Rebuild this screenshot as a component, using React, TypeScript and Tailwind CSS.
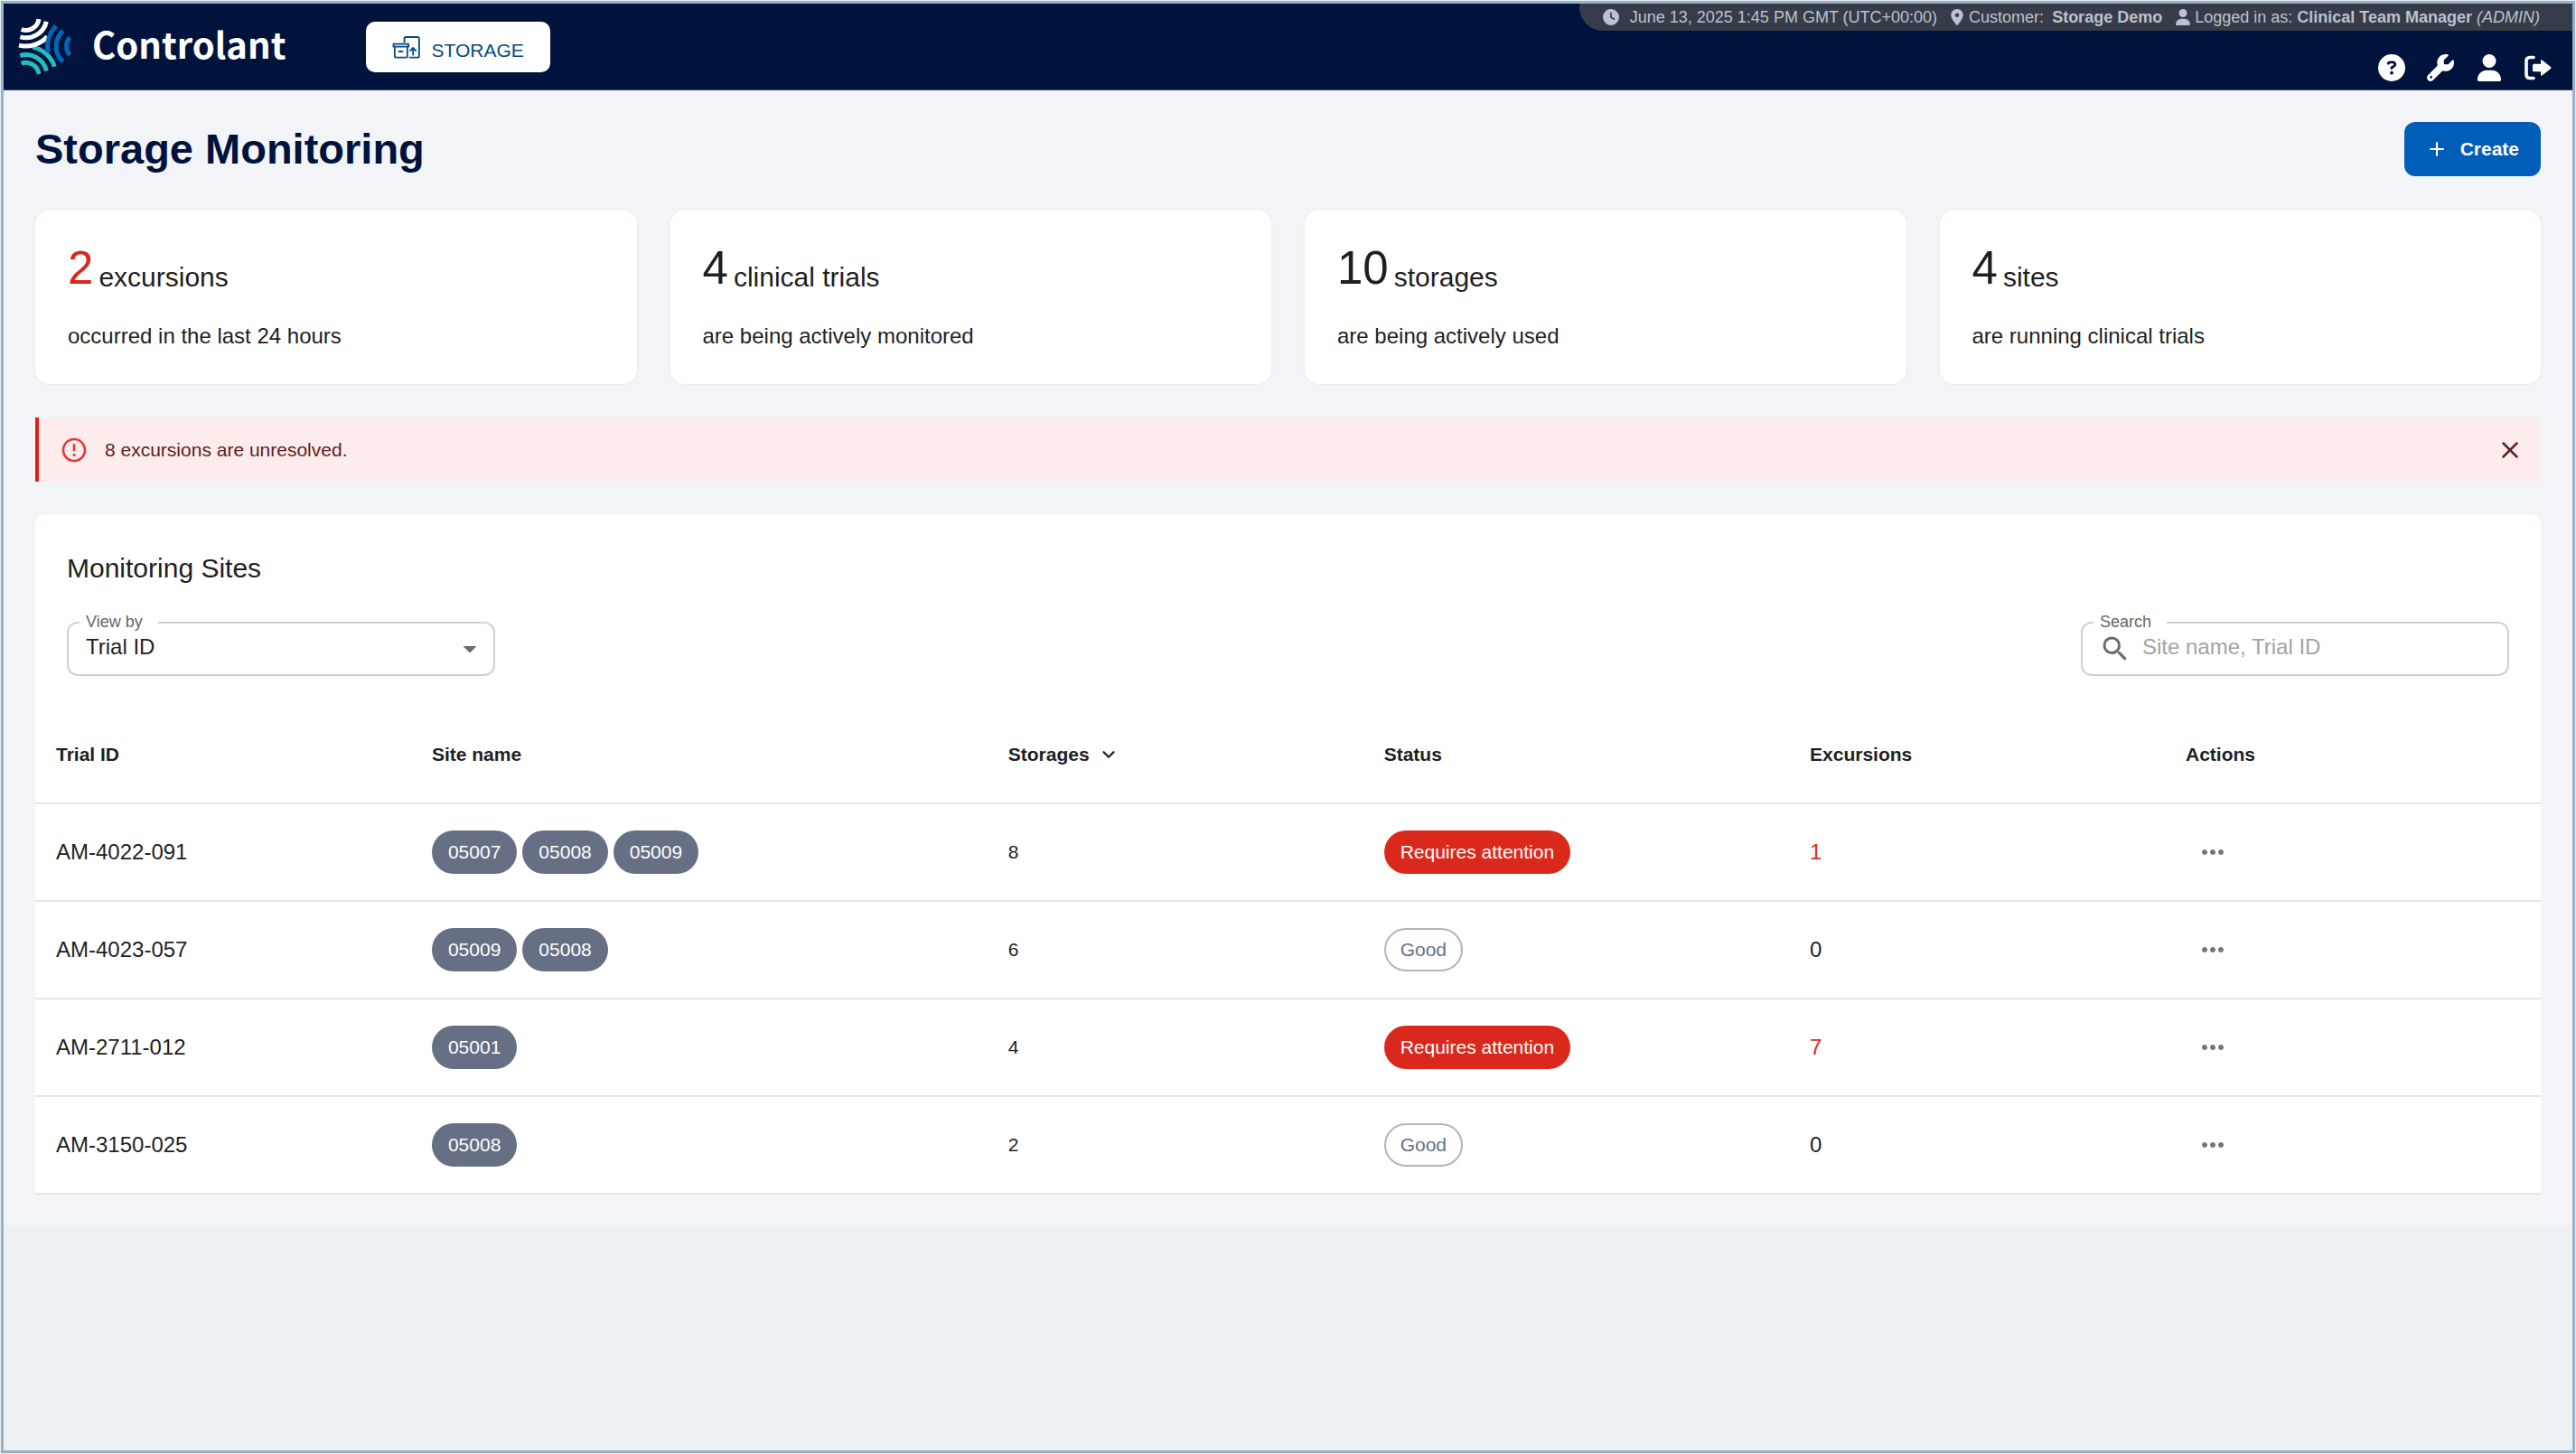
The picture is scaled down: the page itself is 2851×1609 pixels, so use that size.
import type { ReactNode } from "react";
import { FaClock, FaLocationDot, FaUser, FaCircleQuestion, FaWrench } from "react-icons/fa6";
import { MdArrowDropDown, MdErrorOutline, MdMoreHoriz, MdSearch } from "react-icons/md";
import { ChevronDown, Plus, X } from "lucide-react";

const stats = [
  { value: 2, label: "excursions", note: "occurred in the last 24 hours", alert: true },
  { value: 4, label: "clinical trials", note: "are being actively monitored", alert: false },
  { value: 10, label: "storages", note: "are being actively used", alert: false },
  { value: 4, label: "sites", note: "are running clinical trials", alert: false },
];

const rows = [
  { trial: "AM-4022-091", sites: ["05007", "05008", "05009"], storages: 8, excursions: 1 },
  { trial: "AM-4023-057", sites: ["05009", "05008"], storages: 6, excursions: 0 },
  { trial: "AM-2711-012", sites: ["05001"], storages: 4, excursions: 7 },
  { trial: "AM-3150-025", sites: ["05008"], storages: 2, excursions: 0 },
];

function LogoMark() {
  return (
    <svg viewBox="30 31 180 188" className="h-[63px] w-[60px] shrink-0" fill="none" strokeWidth="15" aria-hidden="true">
      <g stroke="#27bdbe">
        <path d="M41 181 A43 43 0 0 1 99 216" />
        <path d="M37 155 A69 69 0 0 1 124 206" />
        <path d="M78 127 A96 96 0 0 1 151 192" />
      </g>
      <g stroke="#ffffff">
        <path d="M41 68 A43 43 0 0 0 99 34" />
        <path d="M37 93 A69 69 0 0 0 124 42" />
        <path d="M33 121 A96 96 0 0 0 127 92" />
      </g>
      <g stroke="#0067b9">
        <path d="M202 95 A43 43 0 0 0 202 153" />
        <path d="M179 73 A69 69 0 0 0 179 175" />
        <path d="M156 57 A97 97 0 0 0 130 144" />
      </g>
    </svg>
  );
}

function StorageIcon() {
  return (
    <svg
      viewBox="105 68 92 75"
      className="mt-[2px] h-[25px] w-[31px]"
      fill="none"
      stroke="#0b4a80"
      strokeWidth="5.5"
      strokeLinecap="round"
      strokeLinejoin="round"
      aria-hidden="true"
    >
      <path d="M109 94 H159 V103 H109 Z" />
      <path d="M113 103 V134 Q113 139 118 139 H151 Q155 139 155 134 V103" />
      <path d="M127 119 H139" />
      <path d="M145 88 V76 Q145 71 150 71 H189 Q194 71 194 76 V134 Q194 139 189 139 H163" />
      <path d="M174 130 V107 M165 116 L174 107 L183 116" />
    </svg>
  );
}

function LogoutIcon() {
  return (
    <svg viewBox="0 0 30 30" className="size-[30px]" aria-hidden="true">
      <path d="M10 3.5 H6 Q2 3.5 2 7.5 V22.5 Q2 26.5 6 26.5 H10" fill="none" stroke="white" strokeWidth="3.6" strokeLinecap="round" />
      <path
        d="M10.5 10.8 H18 V7.6 Q18 5.6 19.8 6.7 L29 14 Q30 15 29 16 L19.8 23.3 Q18 24.4 18 22.4 V19.2 H10.5 Q9 19.2 9 17.7 V12.3 Q9 10.8 10.5 10.8 Z"
        fill="white"
      />
    </svg>
  );
}

function IconButton({ label, children }: { label: string; children: ReactNode }) {
  return (
    <button type="button" aria-label={label} className="flex size-[30px] items-center justify-center text-white">
      {children}
    </button>
  );
}

function Header() {
  return (
    <header className="flex h-24 justify-between border-b border-[#3a3a5c] bg-[#00133d]">
      <div className="flex items-center">
        <a href="#home" className="ml-4 flex items-center gap-[22px]" aria-label="Controlant">
          <LogoMark />
          <span className="pb-2 font-['Noto_Sans_CJK_JP','Open_Sans',sans-serif] text-[40px] leading-[48px] font-bold text-white">
            Controlant
          </span>
        </a>
        <nav className="ml-[89px]">
          <a
            href="#storage"
            className="flex h-14 items-center gap-3 rounded-[10px] bg-white px-[29px] text-[21px] leading-6 text-[#0b4a80]"
          >
            <StorageIcon />
            <span className="pt-2">STORAGE</span>
          </a>
        </nav>
      </div>
      <div className="flex flex-col items-end">
        <div className="flex h-[30px] items-center rounded-bl-[26px] bg-[#363c48] pr-9 pl-[26px] text-[18px] leading-5 text-[#bcc2ce]">
          <FaClock className="mr-3 size-[18px]" />
          <span className="mr-[13px]">June 13, 2025 1:45 PM GMT (UTC+00:00)</span>
          <FaLocationDot className="mr-1 size-[18px]" />
          <span className="mr-[9px]">Customer:</span>
          <strong className="mr-[14px]">Storage Demo</strong>
          <FaUser className="mr-1 size-[18px]" />
          <span>
            Logged in as: <strong>Clinical Team Manager</strong> <em>(ADMIN)</em>
          </span>
        </div>
        <div className="mt-[26px] flex gap-6 pr-[23px]">
          <IconButton label="Help">
            <FaCircleQuestion size={30} />
          </IconButton>
          <IconButton label="Settings">
            <FaWrench size={30} />
          </IconButton>
          <IconButton label="Profile">
            <FaUser size={30} />
          </IconButton>
          <IconButton label="Log out">
            <LogoutIcon />
          </IconButton>
        </div>
      </div>
    </header>
  );
}

const fieldLabel = "absolute -top-[10px] left-[14px] bg-white pr-[17px] pl-[7px] text-[18px] leading-5 text-[#666666]";

function Status({ attention }: { attention: boolean }) {
  return attention ? (
    <span className="inline-flex h-12 items-center rounded-full bg-[#da291c] px-[18px] text-[21px] text-white">
      Requires attention
    </span>
  ) : (
    <span className="inline-flex h-12 items-center rounded-full border-2 border-[#b0b5c2] px-4 text-[21px] text-[#666f84]">
      Good
    </span>
  );
}

function SitesTable() {
  return (
    <table className="mt-[33px] w-full table-fixed border-collapse text-left">
      <colgroup>
        <col className="w-[15%]" />
        <col className="w-[23%]" />
        <col className="w-[15%]" />
        <col className="w-[17%]" />
        <col className="w-[15%]" />
        <col className="w-[15%]" />
      </colgroup>
      <thead>
        <tr className="h-[108px] border-b-2 border-[#e5e6e7] text-[21px] leading-7">
          <th className="px-[23px]">Trial ID</th>
          <th className="px-[23px]">Site name</th>
          <th className="px-[23px]" aria-sort="descending">
            <button type="button" className="flex items-center gap-[10px] font-bold">
              Storages
              <ChevronDown size={22} strokeWidth={2.5} />
            </button>
          </th>
          <th className="px-[23px]">Status</th>
          <th className="px-[23px]">Excursions</th>
          <th className="px-[23px]">Actions</th>
        </tr>
      </thead>
      <tbody>
        {rows.map((row) => (
          <tr key={row.trial} className="h-[108px] border-b-2 border-[#e5e6e7] text-[24px] leading-8">
            <td className="px-[23px]">{row.trial}</td>
            <td className="px-[23px]">
              <div className="flex gap-[6px]">
                {row.sites.map((site) => (
                  <span
                    key={site}
                    className="inline-flex h-12 items-center rounded-full bg-[#666f84] px-[18px] text-[21px] text-white"
                  >
                    {site}
                  </span>
                ))}
              </div>
            </td>
            <td className="px-[23px] text-[21px]">{row.storages}</td>
            <td className="px-[23px]">
              <div className="flex">
                <Status attention={row.excursions > 0} />
              </div>
            </td>
            <td className={row.excursions > 0 ? "px-[23px] text-[#da291c]" : "px-[23px]"}>{row.excursions}</td>
            <td className="px-[23px]">
              <button
                type="button"
                aria-label={`Actions for ${row.trial}`}
                className="flex size-[60px] items-center justify-center text-[#757575]"
              >
                <MdMoreHoriz size={36} />
              </button>
            </td>
          </tr>
        ))}
      </tbody>
    </table>
  );
}

export default function App() {
  return (
    <div className="flex min-h-screen bg-[#e6eef2] p-px font-['Liberation_Sans',Arial,sans-serif] text-[#1f1f1f]">
      <div className="flex-1 border-[3px] border-[#9ab0c5] bg-[#edf1f4]">
        <Header />
        <main className="bg-[#f2f4f8] px-[35px] py-[35px]">
          <div className="flex items-center justify-between">
            <h1 className="text-[47px] leading-[60px] font-bold text-[#00133d]">Storage Monitoring</h1>
            <button
              type="button"
              className="flex h-[60px] items-center gap-[14px] rounded-xl bg-[#005eb8] px-6 text-[21px] font-bold text-white"
            >
              <Plus size={24} strokeWidth={2.2} />
              Create
            </button>
          </div>

          <section aria-label="Summary" className="mt-[37px] grid grid-cols-4 gap-[37px]">
            {stats.map((stat) => (
              <div key={stat.label} className="rounded-2xl bg-white px-9 py-[35px] shadow-[0_0_3px_rgba(0,0,0,0.08)]">
                <p className="flex items-end gap-[6px]">
                  <span className={stat.alert ? "text-[51px] leading-[60px] text-[#da291c]" : "text-[51px] leading-[60px]"}>
                    {stat.value}
                  </span>
                  <span className="text-[30px] leading-10">{stat.label}</span>
                </p>
                <p className="mt-[27px] text-[24px] leading-9">{stat.note}</p>
              </div>
            ))}
          </section>

          <div
            role="alert"
            className="mt-[37px] flex h-[71px] items-center border-l-4 border-[#e0201b] bg-[#fcecec] pr-[19px] pl-[23px] text-[21px] leading-7 text-[#5f2120]"
          >
            <MdErrorOutline size={32} className="text-[#e53935]" />
            <span className="ml-[18px] flex-1">8 excursions are unresolved.</span>
            <button type="button" aria-label="Dismiss">
              <X size={30} strokeWidth={2} />
            </button>
          </div>

          <section className="mt-9 rounded-t-xl bg-white">
            <h2 className="px-[35px] pt-10 text-[30px] leading-10">Monitoring Sites</h2>
            <div className="mt-[39px] flex justify-between px-[35px]">
              <div className="relative w-[474px]">
                <select
                  id="view-by"
                  defaultValue="trial"
                  className="block h-[60px] w-full appearance-none rounded-xl border-2 border-[#d0d0d0] bg-white pr-12 pb-1 pl-[19px] text-[24px]"
                >
                  <option value="trial">Trial ID</option>
                  <option value="site">Site name</option>
                </select>
                <label htmlFor="view-by" className={fieldLabel}>
                  View by
                </label>
                <MdArrowDropDown size={36} className="pointer-events-none absolute top-3 right-[10px] text-[#6b6b6b]" />
              </div>
              <div className="relative w-[474px]">
                <div className="flex h-[60px] items-center rounded-xl border-2 border-[#d0d0d0] pl-[18px]">
                  <MdSearch size={36} className="shrink-0 text-[#6b6b6b]" />
                  <input
                    id="search"
                    type="text"
                    placeholder="Site name, Trial ID"
                    className="ml-3 min-w-0 flex-1 pb-1 text-[24px] outline-none placeholder:text-[#a3a3a3]"
                  />
                </div>
                <label htmlFor="search" className={fieldLabel}>
                  Search
                </label>
              </div>
            </div>
            <SitesTable />
          </section>
        </main>
      </div>
    </div>
  );
}
